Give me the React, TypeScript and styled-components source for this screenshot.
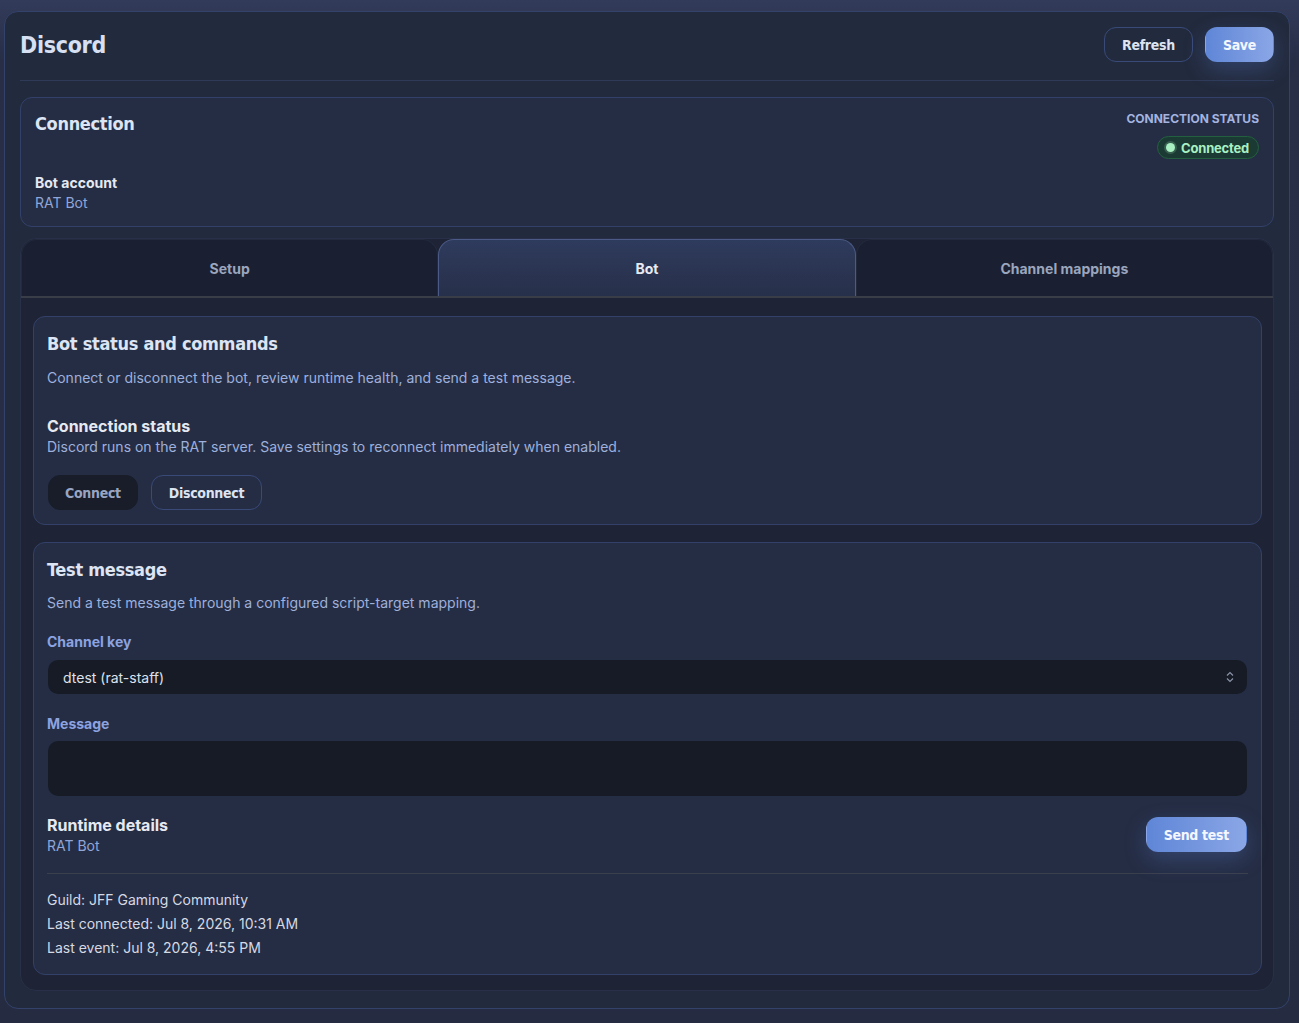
import { FC } from "react";
import styled, { createGlobalStyle } from "styled-components";

const GlobalStyle = createGlobalStyle`
  html, body {
    margin: 0;
    padding: 0;
    background: linear-gradient(180deg, #323b5a 0px, #272e46 60px, #252c42 100%);
    min-height: 100%;
  }
  body {
    font-family: Inter, "Noto Sans", sans-serif;
    color: #e4e8f1;
  }
  * {
    box-sizing: border-box;
  }
`;

const HEAD = `"DejaVu Sans Condensed", "DejaVu Sans", sans-serif`;

const Page = styled.div`
  padding: 11px 9px 14px 4px;
`;

const Shell = styled.main`
  border: 1px solid #33426b;
  border-radius: 14px;
  background: #222a3d;
  padding: 15px 15px 17px 15px;
  display: flex;
  flex-direction: column;
`;

const Header = styled.header`
  display: flex;
  align-items: center;
  justify-content: space-between;
  padding-bottom: 18px;
  margin-bottom: 16px;
  border-bottom: 1px solid #2f3a58;
`;

const PageTitle = styled.h1`
  margin: 0;
  font-family: ${HEAD};
  font-size: 23px;
  font-weight: 700;
  color: #d7e0f3;
  letter-spacing: -0.3px;
`;

const Actions = styled.div`
  display: flex;
  gap: 12px;
`;

const Button = styled.button<{ $variant?: "primary" | "outline" | "dark" }>`
  height: 35px;
  padding: 0 ${({ $variant }) => ($variant === "dark" ? 16 : 17)}px;
  border-radius: 12px;
  font-family: ${HEAD};
  font-size: 14px;
  letter-spacing: -0.3px;
  font-weight: 700;
  cursor: pointer;
  border: 1px solid
    ${({ $variant }) =>
      $variant === "outline" ? "#394a79" : $variant === "dark" ? "#181d29" : "transparent"};
  color: ${({ $variant }) =>
    $variant === "primary" ? "#f4f7ff" : $variant === "dark" ? "#98a5c2" : "#dde3f1"};
  background: ${({ $variant }) =>
    $variant === "primary"
      ? "linear-gradient(90deg, #5f86d7 0%, #8aa6e6 100%)"
      : $variant === "dark"
      ? "#181d29"
      : "transparent"};
  box-shadow: ${({ $variant }) =>
    $variant === "primary" ? "0 8px 22px rgba(92, 128, 214, 0.28)" : "none"};
`;

const Card = styled.section<{ $inner?: boolean }>`
  border: 1px solid #33416a;
  border-radius: 12px;
  background: #252d44;
  padding: ${({ $inner }) => ($inner ? "14px 13px 14px" : "12px 14px 13px")};
  display: flex;
  flex-direction: column;
`;

const TopRow = styled.div`
  display: flex;
  justify-content: space-between;
  align-items: flex-start;
`;

const CardTitle = styled.h2<{ $top?: number }>`
  margin: ${({ $top }) => $top ?? 2}px 0 0;
  font-family: ${HEAD};
  font-size: 18px;
  line-height: 24px;
  letter-spacing: -0.3px;
  font-weight: 700;
  color: #dde4f3;
`;

const StatusBox = styled.div`
  display: flex;
  flex-direction: column;
  align-items: flex-end;
  gap: 9px;
  padding-top: 1px;
`;

const Overline = styled.span`
  font-size: 12px;
  line-height: 16px;
  font-weight: 700;
  color: #a3b4e0;
  text-transform: uppercase;
`;

const Badge = styled.span`
  display: inline-flex;
  align-items: center;
  gap: 6px;
  height: 23px;
  padding: 0 9px 0 8px;
  border-radius: 12px;
  border: 1px solid #23603f;
  background: #1b3a33;
  color: #a8f0c2;
  font-size: 13px;
  font-weight: 700;
  letter-spacing: -0.2px;
`;

const Dot = styled.span`
  width: 9px;
  height: 9px;
  border-radius: 50%;
  background: #a8f0c2;
  box-shadow: 0 0 0 2px rgba(168, 240, 194, 0.2);
`;

const Field = styled.div<{ $top?: number }>`
  margin-top: ${({ $top }) => $top ?? 0}px;
  display: flex;
  flex-direction: column;
`;

const Strong = styled.span<{ $size?: number }>`
  font-size: ${({ $size }) => $size ?? 14}px;
  line-height: ${({ $size }) => ($size ? 22 : 20)}px;
  font-weight: 700;
  color: #e6e9f1;
`;

const Accent = styled.span`
  font-size: 14px;
  line-height: 20px;
  color: #8fa6d8;
`;

const Muted = styled.p<{ $top?: number }>`
  margin: ${({ $top }) => $top ?? 0}px 0 0;
  font-size: 14px;
  line-height: 20px;
  color: #9eb0dc;
`;

const Tabs = styled.div`
  margin-top: 11px;
  border: 1px solid #283049;
  border-radius: 16px;
  background: #1e2435;
  overflow: hidden;
`;

const TabList = styled.div`
  display: grid;
  grid-template-columns: repeat(3, 1fr);
  border-bottom: 2px solid #383d47;
`;

const Tab = styled.button<{ $active?: boolean }>`
  height: 57px;
  border-radius: 16px 16px 0 0;
  font-family: Inter, sans-serif;
  font-size: 14px;
  font-weight: 700;
  cursor: pointer;
  color: ${({ $active }) => ($active ? "#e6eaf4" : "#9ba6be")};
  border: 1px solid ${({ $active }) => ($active ? "#4b5a86" : "#232a3e")};
  border-bottom: none;
  background: ${({ $active }) =>
    $active ? "linear-gradient(180deg, #2f3b5d 0%, #27304a 100%)" : "#1a2031"};
`;

const TabPanel = styled.div`
  padding: 18px 11px 15px 12px;
  display: flex;
  flex-direction: column;
  gap: 17px;
`;

const ButtonRow = styled.div`
  display: flex;
  gap: 13px;
  margin-top: 18px;
  padding-left: 1px;
`;

const Label = styled.label<{ $top?: number }>`
  margin-top: ${({ $top }) => $top ?? 0}px;
  font-size: 14px;
  line-height: 20px;
  font-weight: 700;
  color: #8ca3e0;
`;

const SelectBox = styled.div`
  margin: 8px 1px 0;
  height: 34px;
  border-radius: 10px;
  background: #171b26;
  display: flex;
  align-items: center;
  justify-content: space-between;
  padding: 0 13px 0 15px;
  font-size: 14px;
  color: #dde2ec;
`;

const TextArea = styled.div`
  margin: 7px 1px 0;
  height: 55px;
  border-radius: 10px;
  background: #171b26;
`;

const RuntimeRow = styled.div`
  margin-top: 18px;
  display: flex;
  justify-content: space-between;
  align-items: flex-start;
  padding-bottom: 17px;
  border-bottom: 1px solid #3b404d;
`;

const SendWrap = styled.div`
  margin-top: 3px;
  margin-right: 1px;
`;

const Details = styled.div`
  margin-top: 14px;
  display: flex;
  flex-direction: column;
`;

const Line = styled.span`
  font-size: 14px;
  line-height: 24px;
  color: #d5d9e3;
`;

const UpDown: FC = () => (
  <svg width="8" height="12" viewBox="0 0 8 12" fill="none" stroke="#8a93a6" strokeWidth="1.2">
    <path d="M1 4.5 L4 1.5 L7 4.5" />
    <path d="M1 7.5 L4 10.5 L7 7.5" />
  </svg>
);

const App: FC = () => {
  return (
    <Page>
      <GlobalStyle />
      <Shell>
        <Header>
          <PageTitle>Discord</PageTitle>
          <Actions>
            <Button $variant="outline">Refresh</Button>
            <Button $variant="primary">Save</Button>
          </Actions>
        </Header>

        <Card>
          <TopRow>
            <CardTitle>Connection</CardTitle>
            <StatusBox>
              <Overline>Connection status</Overline>
              <Badge>
                <Dot />
                Connected
              </Badge>
            </StatusBox>
          </TopRow>
          <Field $top={14}>
            <Strong>Bot account</Strong>
            <Accent>RAT Bot</Accent>
          </Field>
        </Card>

        <Tabs>
          <TabList>
            <Tab>Setup</Tab>
            <Tab $active>Bot</Tab>
            <Tab>Channel mappings</Tab>
          </TabList>
          <TabPanel>
            <Card $inner>
              <CardTitle $top={1}>Bot status and commands</CardTitle>
              <Muted $top={12}>
                Connect or disconnect the bot, review runtime health, and send a test message.
              </Muted>
              <Field $top={27}>
                <Strong $size={16}>Connection status</Strong>
                <Muted>
                  Discord runs on the RAT server. Save settings to reconnect immediately when
                  enabled.
                </Muted>
              </Field>
              <ButtonRow>
                <Button $variant="dark">Connect</Button>
                <Button $variant="outline">Disconnect</Button>
              </ButtonRow>
            </Card>

            <Card $inner>
              <CardTitle $top={1}>Test message</CardTitle>
              <Muted $top={11}>Send a test message through a configured script-target mapping.</Muted>
              <Label $top={19}>Channel key</Label>
              <SelectBox>
                <span>dtest (rat-staff)</span>
                <UpDown />
              </SelectBox>
              <Label $top={20}>Message</Label>
              <TextArea />
              <RuntimeRow>
                <Field>
                  <Strong $size={16}>Runtime details</Strong>
                  <Accent>RAT Bot</Accent>
                </Field>
                <SendWrap>
                  <Button $variant="primary">Send test</Button>
                </SendWrap>
              </RuntimeRow>
              <Details>
                <Line>Guild: JFF Gaming Community</Line>
                <Line>Last connected: Jul 8, 2026, 10:31 AM</Line>
                <Line>Last event: Jul 8, 2026, 4:55 PM</Line>
              </Details>
            </Card>
          </TabPanel>
        </Tabs>
      </Shell>
    </Page>
  );
};

export default App;
